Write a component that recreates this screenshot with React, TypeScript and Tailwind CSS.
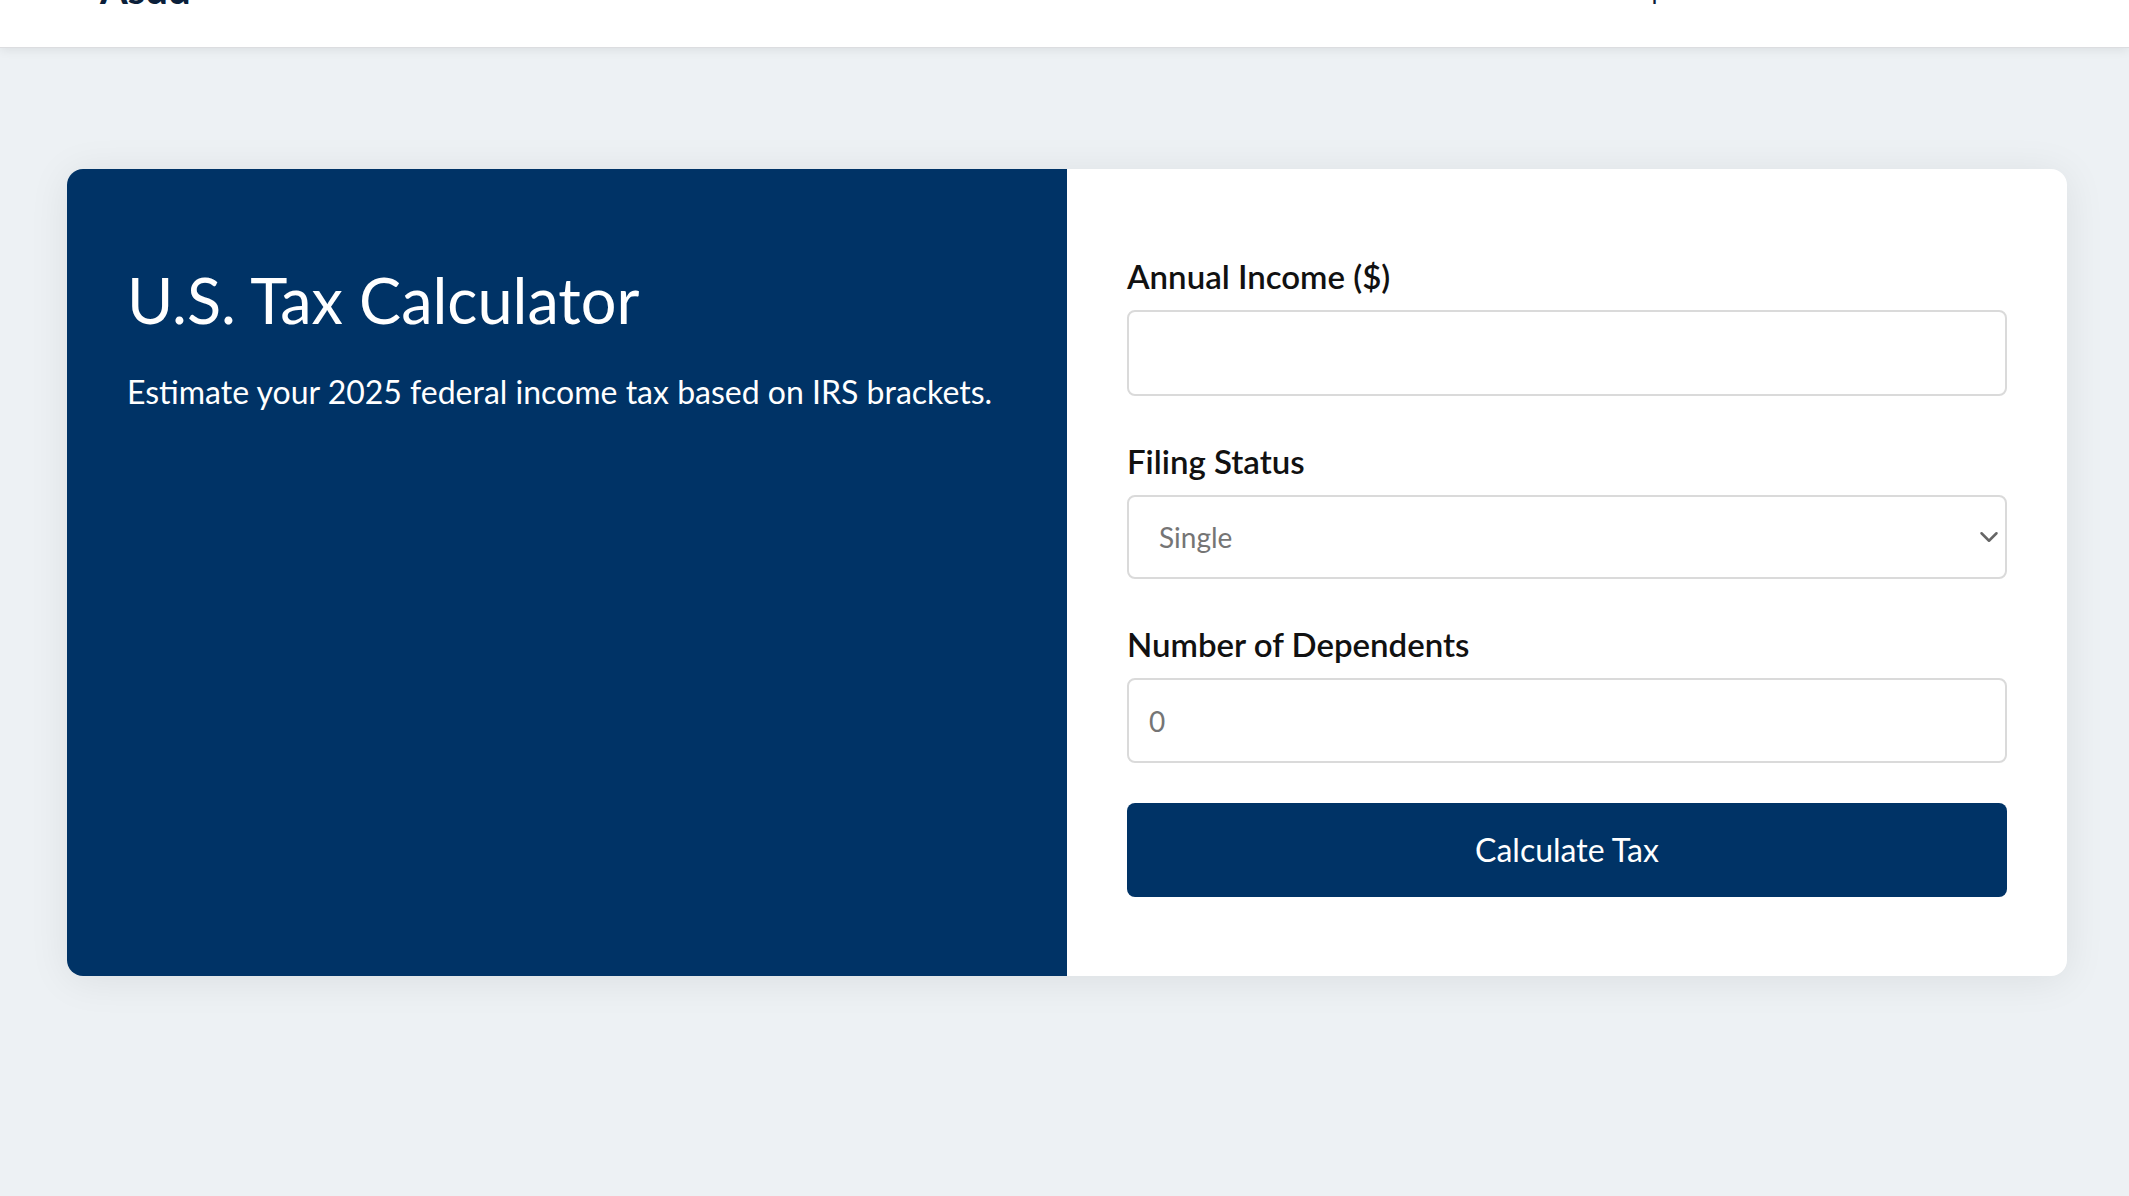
import { ChevronDown } from "lucide-react"

const font = { fontFamily: '"Segoe UI", Lato, "Open Sans", sans-serif' }

function Field({ label, children }: { label: string; children: React.ReactNode }) {
  return (
    <div className="flex flex-col">
      <label className="text-[33px] font-semibold leading-[45px] text-[#111]">{label}</label>
      <div className="mt-[11px]">{children}</div>
    </div>
  )
}

export default function App() {
  return (
    <div className="min-h-[1256px] bg-[#edf1f4] -mt-[60px]" style={font}>
      <header className="h-[108px] bg-white border-b border-[#dcdde0] shadow-[0_2px_10px_rgba(0,0,0,0.08)] flex items-center justify-between px-[100px]">
        <span className="text-[40px] font-bold leading-none text-[#0b1f3a] -mt-[10px]">Asdd</span>
        <nav className="flex gap-[40px] text-[26px] text-[#0b1f3a] -mt-[9px] mr-[363px]">
          <span>Help</span>
        </nav>
      </header>

      <main className="pt-[121px] pl-[67px]">
        <div className="w-[2000px] h-[807px] grid grid-cols-2 rounded-2xl overflow-hidden bg-white shadow-[0_4px_40px_rgba(0,0,0,0.08)]">
          <section className="bg-[#003366] text-white px-[60px] pt-[92px]">
            <h1 className="text-[63px] leading-[78px] font-normal">U.S. Tax Calculator</h1>
            <p className="mt-[30px] text-[32px] leading-[45px]">
              Estimate your 2025 federal income tax based on IRS brackets.
            </p>
          </section>

          <section className="px-[60px] pt-[6px] flex flex-col justify-center gap-[43px]">
            <Field label="Annual Income ($)">
              <input
                type="number"
                className="w-full h-[86px] rounded-lg border-2 border-[#dadada] px-[20px] text-[28px] outline-none"
              />
            </Field>
            <Field label="Filing Status">
              <div className="relative">
                <select className="w-full h-[84px] appearance-none rounded-lg border-2 border-[#dadada] pl-[30px] pr-[60px] text-[28px] text-[#757575] bg-white outline-none">
                  <option>Single</option>
                  <option>Married Filing Jointly</option>
                  <option>Head of Household</option>
                </select>
                <ChevronDown className="absolute right-[3px] top-1/2 -translate-y-1/2 w-[30px] h-[30px] text-[#666]" strokeWidth={2} />
              </div>
            </Field>
            <Field label="Number of Dependents">
              <input
                type="number"
                placeholder="0"
                className="w-full h-[85px] rounded-lg border-2 border-[#dadada] px-[20px] text-[28px] placeholder:text-[#757575] outline-none"
              />
            </Field>
            <button className="w-full h-[94px] -mt-[3px] rounded-lg bg-[#003366] text-white text-[32px]">
              Calculate Tax
            </button>
          </section>
        </div>
      </main>
    </div>
  )
}
